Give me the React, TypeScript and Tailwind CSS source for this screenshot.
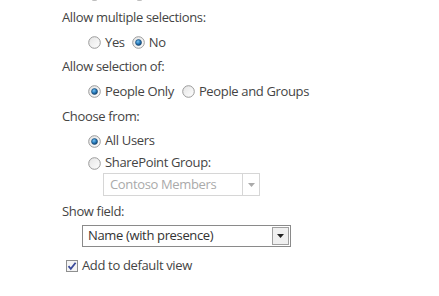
import React from 'react';

const Radio = ({ checked = false }: { checked?: boolean }) => (
  <svg width="13" height="13" viewBox="0 0 13 13" className="shrink-0">
    <defs>
      <linearGradient id={checked ? 'rg-on' : 'rg-off'} x1="0" y1="0" x2="1" y2="1">
        <stop offset="0" stopColor="#e4e4e4" />
        <stop offset="1" stopColor="#ffffff" />
      </linearGradient>
      <radialGradient id="dot" cx="0.4" cy="0.35" r="0.7">
        <stop offset="0" stopColor="#7cc3f0" />
        <stop offset="0.5" stopColor="#2a7fc0" />
        <stop offset="1" stopColor="#0e3a66" />
      </radialGradient>
    </defs>
    <circle cx="6.5" cy="6.5" r="5.8" fill={`url(#${checked ? 'rg-on' : 'rg-off'})`} stroke="#9a9a9a" strokeWidth="1" />
    {checked && <circle cx="6.5" cy="6.5" r="3" fill="url(#dot)" stroke="#1b4870" strokeWidth="0.6" />}
  </svg>
);

const Caret = ({ color = '#222' }: { color?: string }) => (
  <svg width="7" height="4" viewBox="0 0 7 4">
    <path d="M0 0h7L3.5 4z" fill={color} />
  </svg>
);

const App = () => {
  return (
    <div
      className="w-[439px] h-[296px] overflow-hidden bg-white text-[13px] tracking-[-0.35px] text-[#444]"
      style={{ fontFamily: '"Open Sans", "Noto Sans", sans-serif' }}
    >
      <div className="pl-[62px] mt-[-18px] flex flex-col">
        {/* cut-off row above */}
        <div className="h-6 flex items-center pl-[26px] gap-[32px]">
          <Radio />
          <Radio />
        </div>

        <div className="h-6 flex items-center">Allow multiple selections:</div>
        <div className="h-[25px] flex items-center pl-[26px]">
          <label className="flex items-center gap-[4px] mr-[7px]">
            <Radio /> Yes
          </label>
          <label className="flex items-center gap-[4px]">
            <Radio checked /> No
          </label>
        </div>

        <div className="h-6 flex items-center">Allow selection of:</div>
        <div className="h-[25px] flex items-center pl-[26px]">
          <label className="flex items-center gap-[4px] mr-[8px]">
            <Radio checked /> People Only
          </label>
          <label className="flex items-center gap-[4px]">
            <Radio /> People and Groups
          </label>
        </div>

        <div className="h-[25px] flex items-center">Choose from:</div>
        <div className="h-6 flex items-center pl-[26px] gap-[4px]">
          <Radio checked /> All Users
        </div>
        <div className="h-5 flex items-center pl-[26px] gap-[4px]">
          <Radio /> SharePoint Group:
        </div>
        <div className="pl-[41px]">
          <div className="w-[157px] h-[23px] border border-[#d6d6d6] flex items-center justify-between pl-[6px] text-[#aaa]">
            <span>Contoso Members</span>
            <div className="w-[17px] h-[21px] border-l border-[#d6d6d6] flex items-center justify-center">
              <Caret color="#aaa" />
            </div>
          </div>
        </div>

        <div className="h-[22px] mt-[5px] flex items-center">Show field:</div>
        <div className="pl-[20px] mt-[2px]">
          <div className="w-[209px] h-[22px] border border-[#8a8a8a] flex items-center justify-between pl-[5px] text-[#333]">
            <span>Name (with presence)</span>
            <div className="w-[17px] h-[18px] mr-[1px] border border-[#a0a0a0] bg-[#f0f0f0] flex items-center justify-center">
              <Caret />
            </div>
          </div>
        </div>

        <div className="h-[22px] mt-[8px] flex items-center pl-[4px] gap-[4px]">
          <svg width="12" height="12" viewBox="0 0 12 12" className="shrink-0">
            <rect x="0.5" y="0.5" width="11" height="11" fill="#f4f4f4" stroke="#8e8f8f" />
            <path d="M2.5 6.2l2.3 2.6L9.6 2.8" fill="none" stroke="#3b4b9b" strokeWidth="1.8" />
          </svg>
          Add to default view
        </div>
      </div>
    </div>
  );
};

export default App;
